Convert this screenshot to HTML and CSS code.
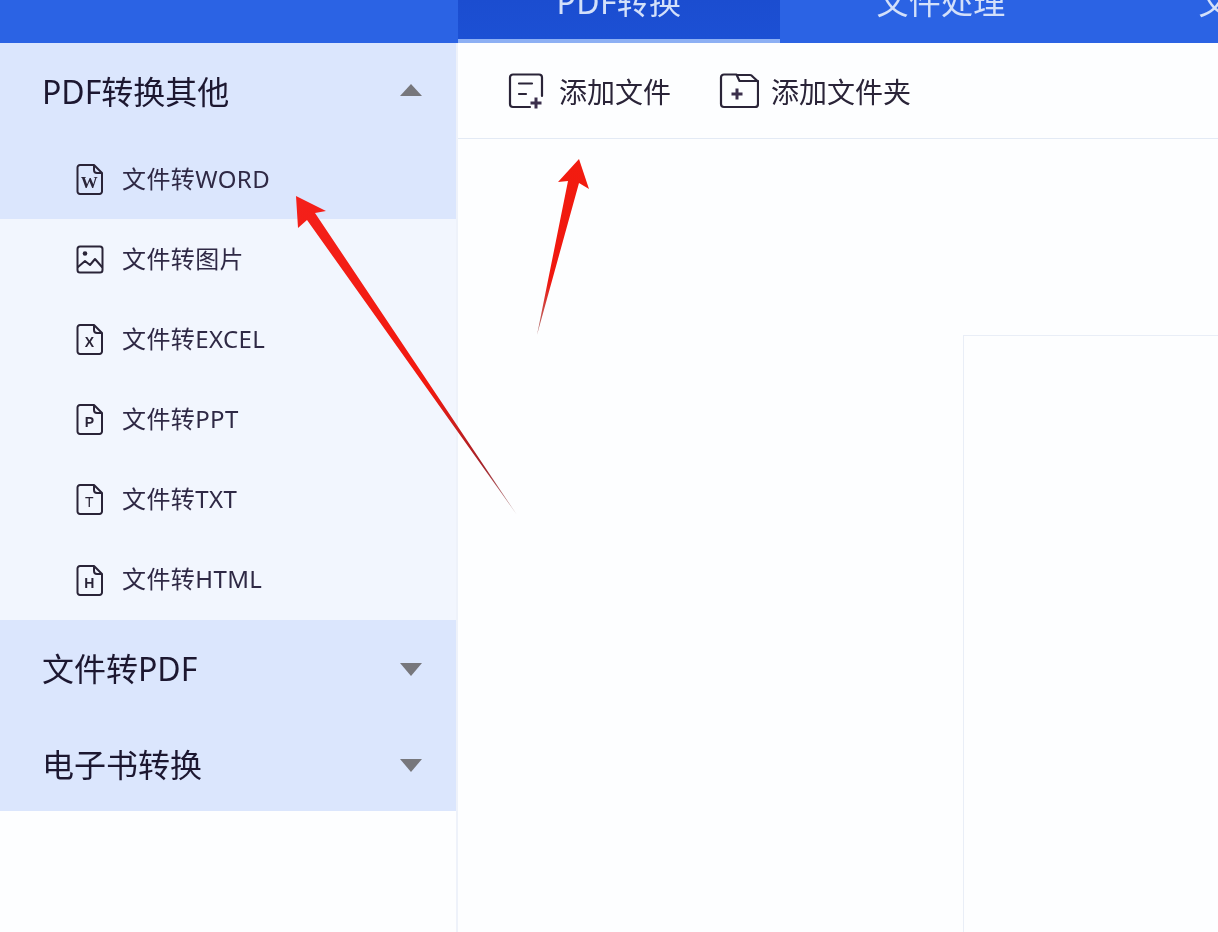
FILE: index.html
```html
<!DOCTYPE html>
<html lang="zh-CN">
<head>
<meta charset="utf-8">
<title>PDF转换</title>
<link rel="stylesheet" href="styles.css">
</head>
<body>
<div class="app">
  <header class="topbar">
    <div class="brand"></div>
    <nav class="tabs">
      <div class="tab tab-active"><span class="tab-label">PDF转换</span></div>
      <div class="tab"><span class="tab-label">文件处理</span></div>
      <div class="tab"><span class="tab-label">文件操作</span></div>
    </nav>
  </header>
  <div class="body">
    <aside class="sidebar">
      <div class="group-head"><span>PDF转换其他</span><i class="caret caret-up"></i></div>
      <div class="item item-active">
        <svg class="item-icon" viewBox="0 0 28 32"><path class="ln" d="M4 2h14l8 8v18.500a2.500 2.500 0 0 1-2.500 2.500h-19.500a2.500 2.500 0 0 1-2.500-2.500v-24a2.500 2.500 0 0 1 2.500-2.500zM18 2v5a3 3 0 0 0 3 3h5"/><text class="glyph glyph-serif" x="13.500" y="25" font-size="17">W</text></svg>
        <span>文件转WORD</span>
      </div>
      <div class="item">
        <svg class="item-icon" viewBox="0 0 28 32"><rect class="ln" x="1.500" y="3.500" width="25" height="26" rx="2.500"/><circle cx="9" cy="10.500" r="2.300" fill="#2a2438"/><path class="ln" d="M2 24l7-6 5 4 5-6 7 8"/></svg>
        <span>文件转图片</span>
      </div>
      <div class="item">
        <svg class="item-icon" viewBox="0 0 28 32"><path class="ln" d="M4 2h14l8 8v18.500a2.500 2.500 0 0 1-2.500 2.500h-19.500a2.500 2.500 0 0 1-2.500-2.500v-24a2.500 2.500 0 0 1 2.500-2.500zM18 2v5a3 3 0 0 0 3 3h5"/><text class="glyph" x="13.500" y="24" font-size="14">X</text></svg>
        <span>文件转EXCEL</span>
      </div>
      <div class="item">
        <svg class="item-icon" viewBox="0 0 28 32"><path class="ln" d="M4 2h14l8 8v18.500a2.500 2.500 0 0 1-2.500 2.500h-19.500a2.500 2.500 0 0 1-2.500-2.500v-24a2.500 2.500 0 0 1 2.500-2.500zM18 2v5a3 3 0 0 0 3 3h5"/><text class="glyph" x="13.500" y="24" font-size="14">P</text></svg>
        <span>文件转PPT</span>
      </div>
      <div class="item">
        <svg class="item-icon" viewBox="0 0 28 32"><path class="ln" d="M4 2h14l8 8v18.500a2.500 2.500 0 0 1-2.500 2.500h-19.500a2.500 2.500 0 0 1-2.500-2.500v-24a2.500 2.500 0 0 1 2.500-2.500zM18 2v5a3 3 0 0 0 3 3h5"/><text class="glyph glyph-thin" x="13.500" y="24" font-size="14">T</text></svg>
        <span>文件转TXT</span>
      </div>
      <div class="item item-last">
        <svg class="item-icon" viewBox="0 0 28 32"><path class="ln" d="M4 2h14l8 8v18.500a2.500 2.500 0 0 1-2.500 2.500h-19.500a2.500 2.500 0 0 1-2.500-2.500v-24a2.500 2.500 0 0 1 2.500-2.500zM18 2v5a3 3 0 0 0 3 3h5"/><text class="glyph" x="13.500" y="24" font-size="14">H</text></svg>
        <span>文件转HTML</span>
      </div>
      <div class="group-head"><span>文件转PDF</span><i class="caret"></i></div>
      <div class="group-head group-head-last"><span>电子书转换</span><i class="caret"></i></div>
    </aside>
    <main class="main">
      <div class="toolbar">
        <div class="tool">
          <svg class="tool-icon" viewBox="0 0 36 36"><path class="ln ln-bold" d="M22 34H5a3 3 0 0 1-3-3V4.500a3 3 0 0 1 3-3H31a3 3 0 0 1 3 3V23"/><path class="ln ln-bold" d="M11 10.500H24M11 21H18"/><path class="plus" d="M28 24.500V35.500M22.500 30H33.500"/></svg>
          <span>添加文件</span>
        </div>
        <div class="tool tool-folder">
          <svg class="tool-icon tool-icon-wide" viewBox="0 0 40 36"><path class="ln ln-bold" d="M5 1.500H17.500L20.500 8H39V31a3 3 0 0 1-3 3H5a3 3 0 0 1-3-3V4.500a3 3 0 0 1 3-3z"/><path class="ln ln-bold" d="M18 2H31a3 3 0 0 1 2.500 1.500L38.500 8"/><path class="plus" d="M18 15.500V26.500M12.500 21H23.500"/></svg>
          <span>添加文件夹</span>
        </div>
      </div>
      <div class="content">
        <section class="panel"></section>
      </div>
    </main>
  </div>
  <svg class="arrows" viewBox="0 0 1218 932">
    <defs>
      <linearGradient id="a1" gradientUnits="userSpaceOnUse" x1="296" y1="196" x2="517" y2="515">
        <stop offset="0" stop-color="#f4201a"/><stop offset=".6" stop-color="#f2190f"/><stop offset=".85" stop-color="#a3232a"/><stop offset="1" stop-color="#bda0a0"/>
      </linearGradient>
      <linearGradient id="a2" gradientUnits="userSpaceOnUse" x1="579" y1="159" x2="537" y2="333">
        <stop offset="0" stop-color="#f21c10"/><stop offset=".7" stop-color="#f0170f"/><stop offset="1" stop-color="#b07070"/>
      </linearGradient>
    </defs>
    <path fill="url(#a1)" d="M296 196L326 211L315 213L517 515L307 220L298 228Z"/>
    <path fill="url(#a2)" d="M579 159L558 182L568 181L537 335L579 183L589 189Z"/>
  </svg>
</div>
</body>
</html>
```
FILE: styles.css
```css
* { box-sizing: border-box; }
html, body { margin: 0; height: 100%; overflow: hidden; }
body {
  font-family: "Noto Sans", "Noto Sans CJK SC", sans-serif;
  color: #231d35;
  background: #fdfeff;
}
.app { position: relative; width: 1218px; height: 932px; display: flex; flex-direction: column; overflow: hidden; filter: blur(0.4px); }

.topbar { height: 43px; flex: none; display: flex; background: #2b63e4; overflow: hidden; }
.brand { width: 458px; flex: none; }
.tabs { display: flex; flex: none; }
.tab {
  width: 322px; flex: none; height: 43px;
  display: flex; justify-content: center; align-items: flex-start;
  color: #d3e0fa; font-size: 32px; line-height: 40px; letter-spacing: .3px;
}
.tab-active { background: linear-gradient(#1b4dd0, #1c50d4); border-bottom: 4px solid #8db0f4; }
.tab-label { margin-top: -18px; white-space: nowrap; }

.body { flex: 1; display: flex; min-height: 0; }
.sidebar { width: 458px; flex: none; background: #fdfeff; border-right: 2px solid #eef2fa; }
.group-head {
  height: 96px; display: flex; align-items: center; justify-content: space-between;
  padding: 0 34px 0 42px; background: #dbe6fd; font-size: 32px; color: #1c1730;
}
.group-head-last { height: 95px; }
.group-head span { margin-bottom: 2px; }
.caret { width: 0; height: 0; margin-top: 3px; border-left: 11px solid transparent; border-right: 11px solid transparent; border-top: 13px solid #77777c; }
.caret-up { margin-top: 0; margin-bottom: 2px; border-top: 0; border-bottom: 12px solid #77777c; }
.item {
  height: 80px; display: flex; align-items: center; gap: 18px;
  padding-left: 76px; background: #f2f6fe; font-size: 24px; color: #2f2945; letter-spacing: .4px;
}
.item span { margin-bottom: 4px; }
.item-last { height: 81px; }
.item-active { background: #dbe6fd; }
.item-icon { width: 28px; height: 32px; flex: none; }
.ln { fill: none; stroke: #2a2438; stroke-width: 2; stroke-linecap: round; stroke-linejoin: round; }
.ln-bold { stroke-width: 2.2; }
.plus { fill: none; stroke: #3b2f4c; stroke-width: 3; }
.glyph { fill: #2a2438; font-family: "Liberation Sans", sans-serif; font-weight: 700; text-anchor: middle; }
.glyph-serif { font-family: "Liberation Serif", serif; }
.glyph-thin { font-weight: 400; }

.main { flex: 1; display: flex; flex-direction: column; min-width: 0; background: #fdfeff; }
.toolbar {
  height: 96px; flex: none; display: flex; align-items: center; gap: 48px;
  padding-left: 50px; border-bottom: 1px solid #e3eaf5; font-size: 28px; color: #2a2438;
}
.tool { display: flex; align-items: center; gap: 15px; }
.tool-folder { gap: 12px; }
.tool-icon { width: 36px; height: 36px; flex: none; }
.tool-icon-wide { width: 40px; }
.content { flex: 1; display: flex; padding: 196px 0 0 505px; min-height: 0; }
.panel { flex: 1; border: 1px solid #e9eef7; border-right: 0; border-bottom: 0; background: #fdfeff; }

.arrows { position: absolute; left: 0; top: 0; width: 1218px; height: 932px; pointer-events: none; }
```
